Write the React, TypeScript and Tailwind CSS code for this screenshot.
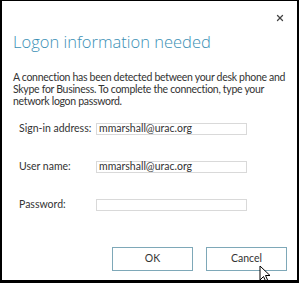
import { X } from 'lucide-react';

function Field({ label, value }: { label: string; value?: string }) {
  return (
    <div className="flex items-center h-[12px]">
      <span className="w-[94px] pl-[17px] whitespace-nowrap text-[10.5px] text-[#333]">{label}</span>
      <div className="w-[151px] h-[12px] border border-[#d9d9d9] flex items-center pl-[2px] text-[10.5px] text-[#333]">
        {value}
      </div>
    </div>
  );
}

export default function App() {
  return (
    <div
      className="relative w-[299px] h-[283px] bg-white border-t border-l-2 border-r-2 border-b-[3px] border-black overflow-hidden"
      style={{ fontFamily: 'Lato, "Open Sans", sans-serif' }}
    >
      <div className="flex justify-end pr-[12px] pt-[12px]">
        <X className="w-[10px] h-[10px] text-[#444]" strokeWidth={3} />
      </div>

      <h1
        className="pl-[11px] mt-[7px] text-[16.5px] font-light leading-[24px] text-[#3a8fb5]"
        style={{ fontFamily: '"Open Sans", sans-serif' }}
      >
        Logon information needed
      </h1>

      <p className="pl-[11px] mt-[17px] whitespace-nowrap text-[10.5px] tracking-[-0.3px] leading-[12px] text-[#333]">
        A connection has been detected between your desk phone and
        <br />
        Skype for Business. To complete the connection, type your
        <br />
        network logon password.
      </p>

      <div className="mt-[16px] flex flex-col gap-[26px]">
        <Field label="Sign-in address:" value="mmarshall@urac.org" />
        <Field label="User name:" value="mmarshall@urac.org" />
        <Field label="Password:" />
      </div>

      <div className="mt-[36px] flex justify-end gap-[13px] pr-[10px]">
        <button className="w-[81px] h-[24px] border border-[#7ea8b8] text-[10.5px] text-[#333]">OK</button>
        <button className="w-[81px] h-[24px] border border-[#7ea8b8] text-[10.5px] text-[#333]">Cancel</button>
      </div>

      <svg className="absolute left-[257px] top-[264px]" width="12" height="19" viewBox="0 0 12 19">
        <path d="M1 1 L1 15 L4.5 11.5 L7 17 L9 16 L6.5 10.5 L11 10.5 Z" fill="white" stroke="black" strokeWidth="1" strokeLinejoin="round" />
      </svg>
    </div>
  );
}
